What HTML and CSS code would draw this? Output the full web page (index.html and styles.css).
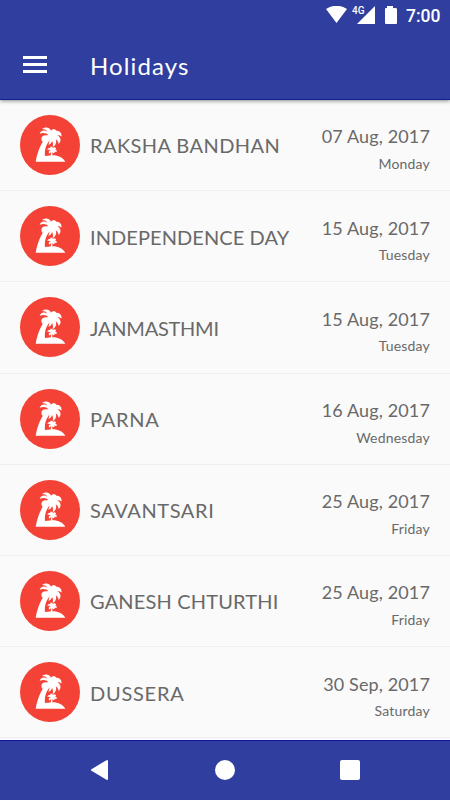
FILE: index.html
```
<!DOCTYPE html>
<html lang="en">
<head>
<meta charset="utf-8">
<title>Holidays</title>
<link rel="stylesheet" href="styles.css">
</head>
<body>
<svg width="0" height="0" class="defs">
  <symbol id="palm" viewBox="30 21 180 180">
    <path d="M110 88C94 101 83 130 77 161H166C159 149 145 142 128 142L105 144C103 127 108 110 119 97Z"/>
    <path d="M115 82C110 75 101 73 89 77C93 66 104 65 112 71C109 65 104 63 96 63C104 55 119 57 123 68C128 62 135 63 139 68C150 67 157 77 154 86C150 82 146 81 142 82C153 88 155 100 146 108C145 101 141 97 137 94C141 104 137 113 128 118C130 110 129 104 126 99C125 105 121 109 115 110C118 103 119 98 117 95C111 92 103 95 98 102C90 92 96 82 107 82Z"/>
    <path d="M124 128C120 125 116 125 112 126C114 120 119 118 123 120L120 117C125 115 128 117 129 120C133 116 138 119 138 123L134 123C141 125 142 130 138 133L134 130C135 134 133 136 129 136L127 132V143H122L124 132C122 133 120 135 119 137C114 133 117 128 122 127Z"/>
  </symbol>
</svg>
<div class="screen">
  <header class="top">
    <div class="status">
      <svg class="signals" width="72" height="20" viewBox="0 0 72 20" fill="#fff">
        <path d="M0 3Q10.500 -3.500 21 3L10.500 17Z"/>
        <path d="M49 0V18H31Z"/>
        <path d="M61 0H67V2H69Q71 2 71 3V17Q71 18 70 18H60Q59 18 59 17V3Q59 2 60 2H61Z"/>
      </svg>
      <span class="network">4G</span>
      <span class="clock">7:00</span>
    </div>
    <div class="toolbar">
      <span class="menu"><i></i><i></i><i></i></span>
      <h1>Holidays</h1>
    </div>
  </header>
  <main class="list">
    <div class="row"><span class="badge"><svg><use href="#palm"/></svg></span><span class="name n1">RAKSHA BANDHAN</span><span class="when"><b>07 Aug, 2017</b><small>Monday</small></span></div>
    <div class="row"><span class="badge"><svg><use href="#palm"/></svg></span><span class="name n2">INDEPENDENCE DAY</span><span class="when"><b>15 Aug, 2017</b><small>Tuesday</small></span></div>
    <div class="row"><span class="badge"><svg><use href="#palm"/></svg></span><span class="name n3">JANMASTHMI</span><span class="when"><b>15 Aug, 2017</b><small>Tuesday</small></span></div>
    <div class="row"><span class="badge"><svg><use href="#palm"/></svg></span><span class="name n4">PARNA</span><span class="when"><b>16 Aug, 2017</b><small>Wednesday</small></span></div>
    <div class="row"><span class="badge"><svg><use href="#palm"/></svg></span><span class="name n5">SAVANTSARI</span><span class="when"><b>25 Aug, 2017</b><small>Friday</small></span></div>
    <div class="row"><span class="badge"><svg><use href="#palm"/></svg></span><span class="name n6">GANESH CHTURTHI</span><span class="when"><b>25 Aug, 2017</b><small>Friday</small></span></div>
    <div class="row"><span class="badge"><svg><use href="#palm"/></svg></span><span class="name n7">DUSSERA</span><span class="when"><b>30 Sep, 2017</b><small>Saturday</small></span></div>
  </main>
  <nav class="nav">
    <svg width="20" height="22" viewBox="0 0 20 22"><path d="M2 11L17 2V20Z" fill="#fff" stroke="#fff" stroke-width="2" stroke-linejoin="round"/></svg>
    <span class="home"></span>
    <span class="recent"></span>
  </nav>
</div>
</body>
</html>
```
FILE: styles.css
```
* { box-sizing: border-box; }
body { margin: 0; font-family: Lato, "Open Sans", sans-serif; color: #696969; }
.defs { position: absolute; }
.screen { width: 450px; height: 800px; display: flex; flex-direction: column; background: #fafafa; overflow: hidden; }

.top { flex: none; height: 100px; background: #303f9f; border-bottom: 1px solid #14208c; box-shadow: 0 1px 4px rgba(0, 0, 0, .45); color: #fff; z-index: 1; }
.status { position: relative; height: 32px; display: flex; justify-content: flex-end; padding: 6px 10px 0 0; font-family: Roboto, sans-serif; }
.signals { margin-right: 8px; }
.network { position: absolute; left: 352px; top: 5px; font-size: 10px; line-height: 12px; font-weight: 500; }
.clock { width: 34px; font-size: 17.500px; line-height: 20px; font-weight: 500; white-space: nowrap; }
.toolbar { height: 65px; display: flex; align-items: center; padding: 0 23px; }
.menu { width: 24px; height: 17px; display: flex; flex-direction: column; justify-content: space-between; }
.menu i { height: 3px; background: #fff; }
.toolbar h1 { margin: 1px 0 0 43px; font-size: 24px; font-weight: 400; letter-spacing: 1.100px; }

.list { flex: none; height: 640px; }
.row { height: 91.200px; padding: 15px 20px; display: flex; align-items: flex-start; border-bottom: 1px solid #eee; }
.badge { width: 60px; height: 60px; border-radius: 50%; background: #f44336; }
.badge svg { display: block; width: 60px; height: 60px; fill: #fff; }
.name { margin: 17.400px 0 0 10px; font-size: 20px; line-height: 26px; white-space: nowrap; }
.n1 { letter-spacing: .42px; }
.n2 { letter-spacing: .08px; }
.n3 { letter-spacing: -.25px; }
.n4 { letter-spacing: .7px; }
.n5 { letter-spacing: .6px; }
.n6 { letter-spacing: .17px; }
.n7 { letter-spacing: .75px; }
.when { margin-left: auto; display: flex; flex-direction: column; align-items: flex-end; }
.when b { margin-top: 9.400px; font-size: 18px; line-height: 24px; font-weight: 400; letter-spacing: .13px; }
.when small { margin-top: 5.600px; font-size: 14px; line-height: 20px; letter-spacing: .2px; }

.nav { flex: none; height: 60px; padding-bottom: 1px; display: grid; grid-template-columns: repeat(3, 125px); justify-content: center; place-items: center; background: #303f9f; border-top: 1px solid #14149a; }
.home { width: 20px; height: 20px; border-radius: 50%; background: #fff; }
.recent { width: 20px; height: 20px; border-radius: 2px; background: #fff; }
```
